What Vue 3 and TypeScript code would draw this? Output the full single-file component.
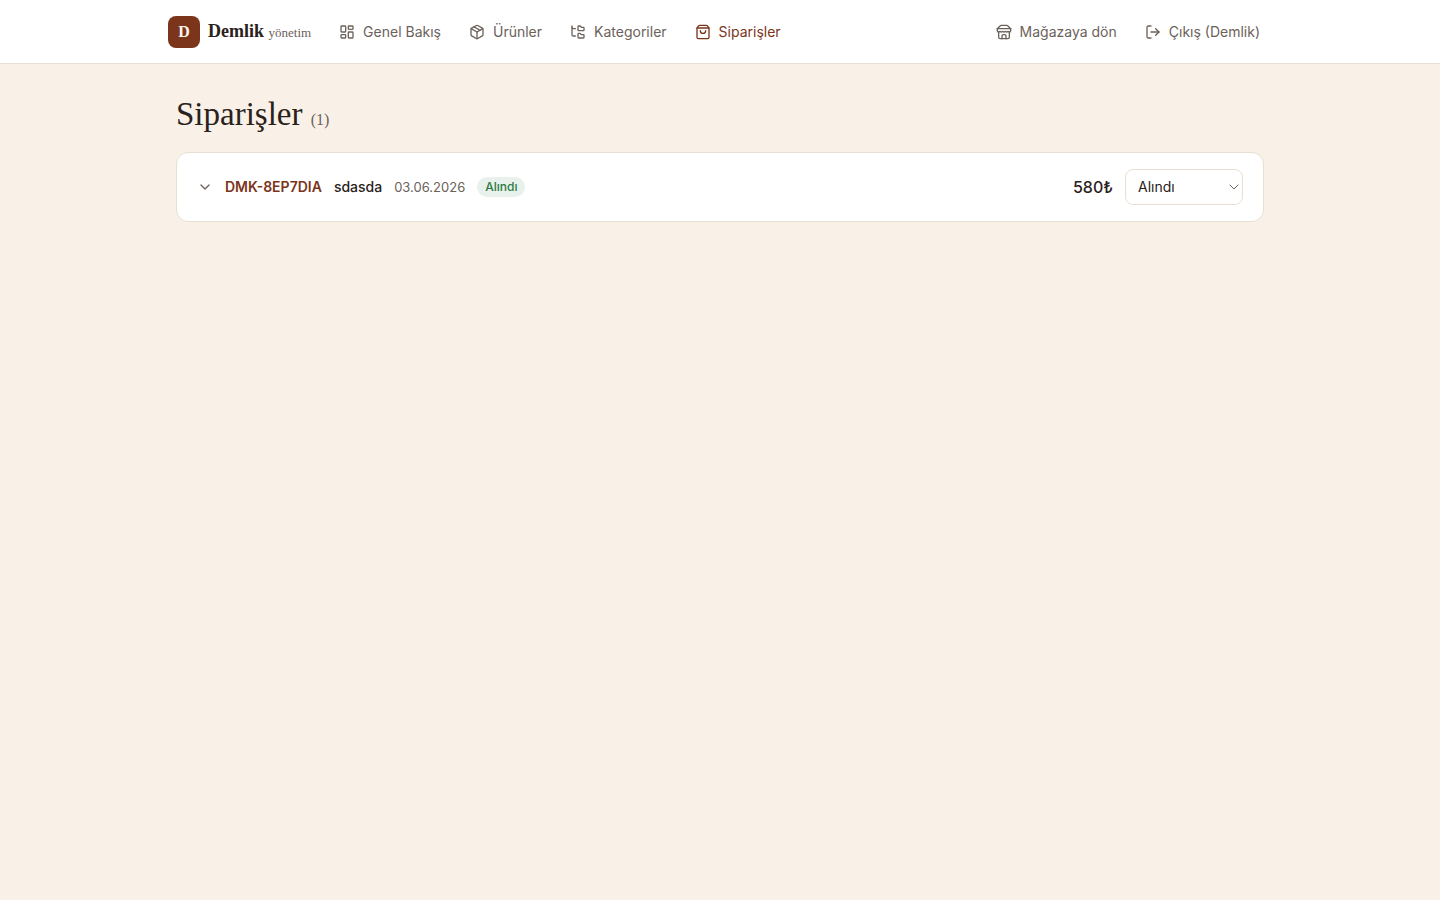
<script setup lang="ts">
import { ref } from 'vue'

interface NavItem {
  label: string
  href: string
  paths: string[]
  active?: boolean
}

const navItems: NavItem[] = [
  {
    label: 'Genel Bakış',
    href: '#genel',
    paths: ['M4 3h5a1 1 0 0 1 1 1v7a1 1 0 0 1-1 1H4a1 1 0 0 1-1-1V4a1 1 0 0 1 1-1z', 'M15 3h5a1 1 0 0 1 1 1v3a1 1 0 0 1-1 1h-5a1 1 0 0 1-1-1V4a1 1 0 0 1 1-1z', 'M15 12h5a1 1 0 0 1 1 1v7a1 1 0 0 1-1 1h-5a1 1 0 0 1-1-1v-7a1 1 0 0 1 1-1z', 'M4 16h5a1 1 0 0 1 1 1v3a1 1 0 0 1-1 1H4a1 1 0 0 1-1-1v-3a1 1 0 0 1 1-1z'],
  },
  {
    label: 'Ürünler',
    href: '#urunler',
    paths: ['M11 21.73a2 2 0 0 0 2 0l7-4A2 2 0 0 0 21 16V8a2 2 0 0 0-1-1.73l-7-4a2 2 0 0 0-2 0l-7 4A2 2 0 0 0 3 8v8a2 2 0 0 0 1 1.73z', 'M12 22V12', 'M3.29 7 12 12l8.71-5', 'm7.5 4.27 9 5.15'],
  },
  {
    label: 'Kategoriler',
    href: '#kategoriler',
    paths: ['M20 10a1 1 0 0 0 1-1V6a1 1 0 0 0-1-1h-2.5a1 1 0 0 1-.8-.4l-.9-1.2A1 1 0 0 0 15 3h-2a1 1 0 0 0-1 1v5a1 1 0 0 0 1 1Z', 'M20 21a1 1 0 0 0 1-1v-3a1 1 0 0 0-1-1h-2.9a1 1 0 0 1-.88-.55l-.42-.85a1 1 0 0 0-.92-.6H13a1 1 0 0 0-1 1v5a1 1 0 0 0 1 1Z', 'M3 5a2 2 0 0 0 2 2h3', 'M3 3v13a2 2 0 0 0 2 2h3'],
  },
  {
    label: 'Siparişler',
    href: '#siparisler',
    active: true,
    paths: ['M3.4 5.467a2 2 0 0 0-.4 1.2V20a2 2 0 0 0 2 2h14a2 2 0 0 0 2-2V6.667a2 2 0 0 0-.4-1.2l-2-2.667A2 2 0 0 0 17 2H7a2 2 0 0 0-1.6.8z', 'M3.103 6.034h17.794', 'M16 10a4 4 0 0 1-8 0'],
  },
]

const storePaths: string[] = ['m2 7 4.41-4.41A2 2 0 0 1 7.83 2h8.34a2 2 0 0 1 1.42.59L22 7', 'M4 12v8a2 2 0 0 0 2 2h12a2 2 0 0 0 2-2v-8', 'M15 22v-4a2 2 0 0 0-2-2h-2a2 2 0 0 0-2 2v4', 'M2 7h20', 'M22 7v3a2 2 0 0 1-2 2a2.7 2.7 0 0 1-1.59-.63.7.7 0 0 0-.82 0A2.7 2.7 0 0 1 16 12a2.7 2.7 0 0 1-1.59-.63.7.7 0 0 0-.82 0A2.7 2.7 0 0 1 12 12a2.7 2.7 0 0 1-1.59-.63.7.7 0 0 0-.82 0A2.7 2.7 0 0 1 8 12a2.7 2.7 0 0 1-1.59-.63.7.7 0 0 0-.82 0A2.7 2.7 0 0 1 4 12a2 2 0 0 1-2-2V7']
const logoutPaths: string[] = ['M9 21H5a2 2 0 0 1-2-2V5a2 2 0 0 1 2-2h4', 'm16 17 5-5-5-5', 'M21 12H9']

const statuses: string[] = ['Alındı', 'Hazırlanıyor', 'Kargoda', 'Teslim edildi']
const orders = ref([
  { code: 'DMK-8EP7DIA', customer: 'sdasda', date: '03.06.2026', status: 'Alındı', total: '580₺' },
])
</script>

<template>
  <div class="page">
    <header class="topbar">
      <div class="topbar-inner">
        <a class="brand" href="#">
          <span class="brand-mark">D</span>
          <span class="brand-name">Demlik <small>yönetim</small></span>
        </a>
        <nav class="nav">
          <a v-for="item in navItems" :key="item.label" :href="item.href" class="nav-link" :class="{ active: item.active }">
            <svg class="icon" viewBox="0 0 24 24" aria-hidden="true"><path v-for="d in item.paths" :key="d" :d="d" /></svg>
            {{ item.label }}
          </a>
        </nav>
        <div class="nav account">
          <a class="nav-link" href="#magaza">
            <svg class="icon" viewBox="0 0 24 24" aria-hidden="true"><path v-for="d in storePaths" :key="d" :d="d" /></svg>
            Mağazaya dön
          </a>
          <button class="nav-link" type="button">
            <svg class="icon" viewBox="0 0 24 24" aria-hidden="true"><path v-for="d in logoutPaths" :key="d" :d="d" /></svg>
            Çıkış (Demlik)
          </button>
        </div>
      </div>
    </header>

    <main class="content">
      <h1 class="title">Siparişler <span class="count">(1)</span></h1>
      <article v-for="order in orders" :key="order.code" class="order">
        <button class="toggle" type="button" aria-label="Sipariş ayrıntıları">
          <svg class="icon" viewBox="0 0 24 24" aria-hidden="true"><path d="m6 9 6 6 6-6" /></svg>
        </button>
        <span class="code">{{ order.code }}</span>
        <span class="customer">{{ order.customer }}</span>
        <span class="date">{{ order.date }}</span>
        <span class="badge">{{ order.status }}</span>
        <span class="total">{{ order.total }}</span>
        <span class="select-wrap">
          <select v-model="order.status" class="select" aria-label="Sipariş durumu">
            <option v-for="s in statuses" :key="s">{{ s }}</option>
          </select>
          <svg class="icon select-arrow" viewBox="0 0 24 24" aria-hidden="true"><path d="m4 8 8 8 8-8" /></svg>
        </span>
      </article>
    </main>
  </div>
</template>

<style>
body {
  margin: 0;
  background: #f9f1e7;
}
</style>

<style scoped>
.page {
  min-height: 100vh;
  background: #f9f1e7;
  color: #2a211b;
  font-family: Inter, "Noto Sans", sans-serif;
  font-size: 14px;
  line-height: 20px;
}
.topbar {
  box-sizing: border-box;
  min-height: 64px;
  display: flex;
  background: #fff;
  border-bottom: 1px solid #e8dfd3;
}
.topbar-inner {
  box-sizing: border-box;
  flex: 1;
  max-width: 1152px;
  margin: 0 auto;
  padding: 0 24px;
  display: flex;
  align-items: center;
  gap: 16px;
}
.brand {
  display: flex;
  align-items: center;
  gap: 8px;
  color: #2a211b;
  text-decoration: none;
  font-family: "Liberation Serif", serif;
}
.brand-mark {
  width: 32px;
  height: 32px;
  border-radius: 8px;
  background: #7a351b;
  color: #fbf3ea;
  display: grid;
  place-items: center;
  font-size: 16px;
  font-weight: 700;
}
.brand-name {
  font-size: 18px;
  font-weight: 700;
  white-space: nowrap;
}
.brand-name small {
  font-size: 13px;
  font-weight: 400;
  color: #6b625b;
}
.nav {
  display: flex;
  align-items: center;
  gap: 4px;
}
.account {
  margin-left: auto;
}
.nav-link {
  display: flex;
  align-items: center;
  gap: 8px;
  padding: 8px 12px;
  border: 0;
  background: none;
  color: #6b625b;
  font: inherit;
  text-decoration: none;
  white-space: nowrap;
  cursor: pointer;
}
.nav-link.active {
  color: #7a351b;
}
.icon {
  width: 16px;
  height: 16px;
  flex: none;
  fill: none;
  stroke: currentColor;
  stroke-width: 2;
  stroke-linecap: round;
  stroke-linejoin: round;
}
.content {
  box-sizing: border-box;
  max-width: 1152px;
  margin: 0 auto;
  padding: 32px;
}
.title {
  margin: 0 0 20px;
  font-family: "Liberation Serif", serif;
  font-size: 33px;
  line-height: 36px;
  font-weight: 400;
}
.count {
  font-size: 16px;
  line-height: 16px;
  color: #6b625b;
}
.order {
  display: flex;
  align-items: center;
  gap: 12px;
  padding: 16px 20px;
  border: 1px solid #e8dfd3;
  border-radius: 12px;
  background: #fff;
}
.toggle {
  display: flex;
  padding: 0;
  border: 0;
  background: none;
  color: #6b625b;
  cursor: pointer;
}
.code {
  color: #7a351b;
  font-weight: 600;
}
.customer {
  font-weight: 500;
}
.date {
  color: #6b625b;
  font-size: 13px;
}
.badge {
  padding: 2px 8px;
  border-radius: 10px;
  background: #e8f1eb;
  color: #2f7a45;
  font-size: 12px;
  line-height: 16px;
  font-weight: 500;
}
.total {
  margin-left: auto;
  font-size: 16px;
  font-weight: 500;
}
.select-wrap {
  position: relative;
  width: 118px;
}
.select {
  appearance: none;
  box-sizing: border-box;
  display: block;
  width: 100%;
  height: 36px;
  padding: 0 24px 0 12px;
  border: 1px solid #e8dfd3;
  border-radius: 8px;
  background: #fff;
  color: inherit;
  font: inherit;
}
.select-arrow {
  position: absolute;
  top: 12px;
  right: 3px;
  width: 12px;
  height: 12px;
  color: #6b625b;
  pointer-events: none;
}
</style>
